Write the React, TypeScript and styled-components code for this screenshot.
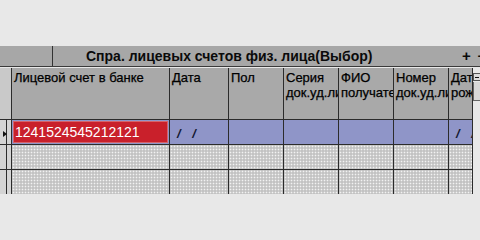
import React from "react";
import styled, { createGlobalStyle } from "styled-components";

const Global = createGlobalStyle`
  html, body { margin: 0; padding: 0; background: #e8e8e8; overflow: hidden; }
  body { width: 480px; height: 240px; font-family: "Liberation Sans", Arial, sans-serif; }
`;

const Page = styled.div`
  width: 480px;
  height: 240px;
  padding-top: 46px;
  box-sizing: border-box;
  overflow: hidden;
`;

const TitleBar = styled.div`
  display: flex;
  height: 21px;
  background: #a7a7a7;
  border-bottom: 1px solid #3a3a3a;
  box-sizing: border-box;
  margin-bottom: 1px;
`;

const TitleStub = styled.div`
  width: 52px;
  border-right: 1px solid #333;
  flex: none;
`;

const Title = styled.div`
  flex: 1;
  padding-left: 33px;
  font-size: 14px;
  font-weight: bold;
  line-height: 20px;
  color: #0a0a0a;
  white-space: nowrap;
`;

const Actions = styled.div`
  display: flex;
  gap: 7px;
  font-size: 15px;
  font-weight: bold;
  line-height: 20px;
  color: #0a0a0a;
  margin-right: -6px;
  white-space: nowrap;
`;

const Grid = styled.div`
  display: grid;
  grid-template-columns: 7px 5px 158px 59px 55px 55px 55px 55px 24px 7px;
  grid-template-rows: 52px 25px 25px 24px;
`;

const HeadCell = styled.div`
  background: #a9a9a9;
  border-right: 1px solid #2c2c2c;
  border-bottom: 1px solid #2c2c2c;
  box-sizing: border-box;
  padding: 2px 0 0 2px;
  font-size: 13px;
  line-height: 15px;
  color: #000;
  -webkit-text-stroke: 0.25px #000;
  white-space: pre;
  overflow: hidden;
`;

const HeadCorner = styled.div`
  grid-column: span 2;
  background: #c9c9c9;
  border-right: 1px solid #2c2c2c;
  border-bottom: 1px solid #2c2c2c;
  box-sizing: border-box;
`;

const ScrollCap = styled.div`
  display: flex;
  flex-direction: column;
  gap: 1px;
  padding-top: 5px;
`;

const ScrollBtn = styled.div<{ $h: number }>`
  height: ${(p) => p.$h}px;
  background: #dcdcdc;
  border: 1px solid #555;
  border-right: none;
  box-sizing: border-box;
  display: flex;
  align-items: center;
  padding-left: 1px;
  &::after {
    content: "";
    width: 4px;
    height: 1px;
    background: #111;
  }
`;

const ScrollPlain = styled.div`
  height: 18px;
  background: #d8d8d8;
  border-left: 1px solid #666;
  border-bottom: 1px solid #666;
`;

const Indicator = styled.div<{ $bottom?: boolean }>`
  background: #d4d4d4;
  border-right: 1px solid #2c2c2c;
  border-bottom: ${(p) => (p.$bottom ? "1px solid #2c2c2c" : "none")};
  box-sizing: border-box;
  display: flex;
  align-items: center;
  padding-left: 3px;
`;

const Pointer = styled.span`
  width: 0;
  height: 0;
  border-top: 3px solid transparent;
  border-bottom: 3px solid transparent;
  border-left: 4px solid #111;
  margin-top: 3px;
`;

const DataCell = styled.div<{ $kind: "sel" | "dot"; $bottom?: boolean }>`
  box-sizing: border-box;
  border-right: 1px solid #2c2c2c;
  border-bottom: ${(p) => (p.$bottom ? "1px solid #2c2c2c" : "none")};
  background: ${(p) =>
    p.$kind === "sel"
      ? "#8f95c8"
      : "radial-gradient(circle, #f2f2f2 0.7px, transparent 1.1px) 0 0 / 3px 3px, #c3c3c3"};
  overflow: hidden;
  display: flex;
  align-items: center;
`;

const EditCell = styled.div`
  flex: 1;
  align-self: stretch;
  margin: 1px;
  background: #c9202b;
  border: 1px solid #d5646a;
  color: #fff;
  font-size: 14px;
  line-height: 20px;
  padding-left: 1px;
  white-space: nowrap;
`;

const DateMask = styled.span`
  padding-left: 7px;
  padding-top: 2px;
  font-size: 13px;
  font-weight: bold;
  font-style: italic;
  color: #141832;
  word-spacing: 8px;
  white-space: pre;
`;

const Blank = styled.div``;

const headers = [
  "Лицевой счет в банке",
  "Дата",
  "Пол",
  "Серия\nдок.уд.лица",
  "ФИО\nполучателя",
  "Номер\nдок.уд.лица",
  "Дата\nрождения",
];

export default function App() {
  const dotRows = [true, false];
  return (
    <>
      <Global />
      <Page>
        <TitleBar>
          <TitleStub />
          <Title>Спра. лицевых счетов физ. лица(Выбор)</Title>
          <Actions>
            <span>+</span>
            <span>÷</span>
          </Actions>
        </TitleBar>
        <Grid>
          <HeadCorner />
          {headers.map((h) => (
            <HeadCell key={h}>{h}</HeadCell>
          ))}
          <ScrollCap>
            <ScrollBtn $h={8} />
            <ScrollPlain />
          </ScrollCap>

          <Indicator $bottom>
            <Pointer />
          </Indicator>
          <Indicator $bottom />
          <DataCell $kind="sel" $bottom>
            <EditCell>1241524545212121</EditCell>
          </DataCell>
          <DataCell $kind="sel" $bottom>
            <DateMask>/ /</DateMask>
          </DataCell>
          <DataCell $kind="sel" $bottom />
          <DataCell $kind="sel" $bottom />
          <DataCell $kind="sel" $bottom />
          <DataCell $kind="sel" $bottom />
          <DataCell $kind="sel" $bottom>
            <DateMask>/ /</DateMask>
          </DataCell>
          <Blank />

          {dotRows.map((b, i) => (
            <React.Fragment key={i}>
              <Indicator $bottom={b} />
              <Indicator $bottom={b} />
              {Array.from({ length: 7 }).map((_, j) => (
                <DataCell key={j} $kind="dot" $bottom={b} />
              ))}
              <Blank />
            </React.Fragment>
          ))}
        </Grid>
      </Page>
    </>
  );
}
